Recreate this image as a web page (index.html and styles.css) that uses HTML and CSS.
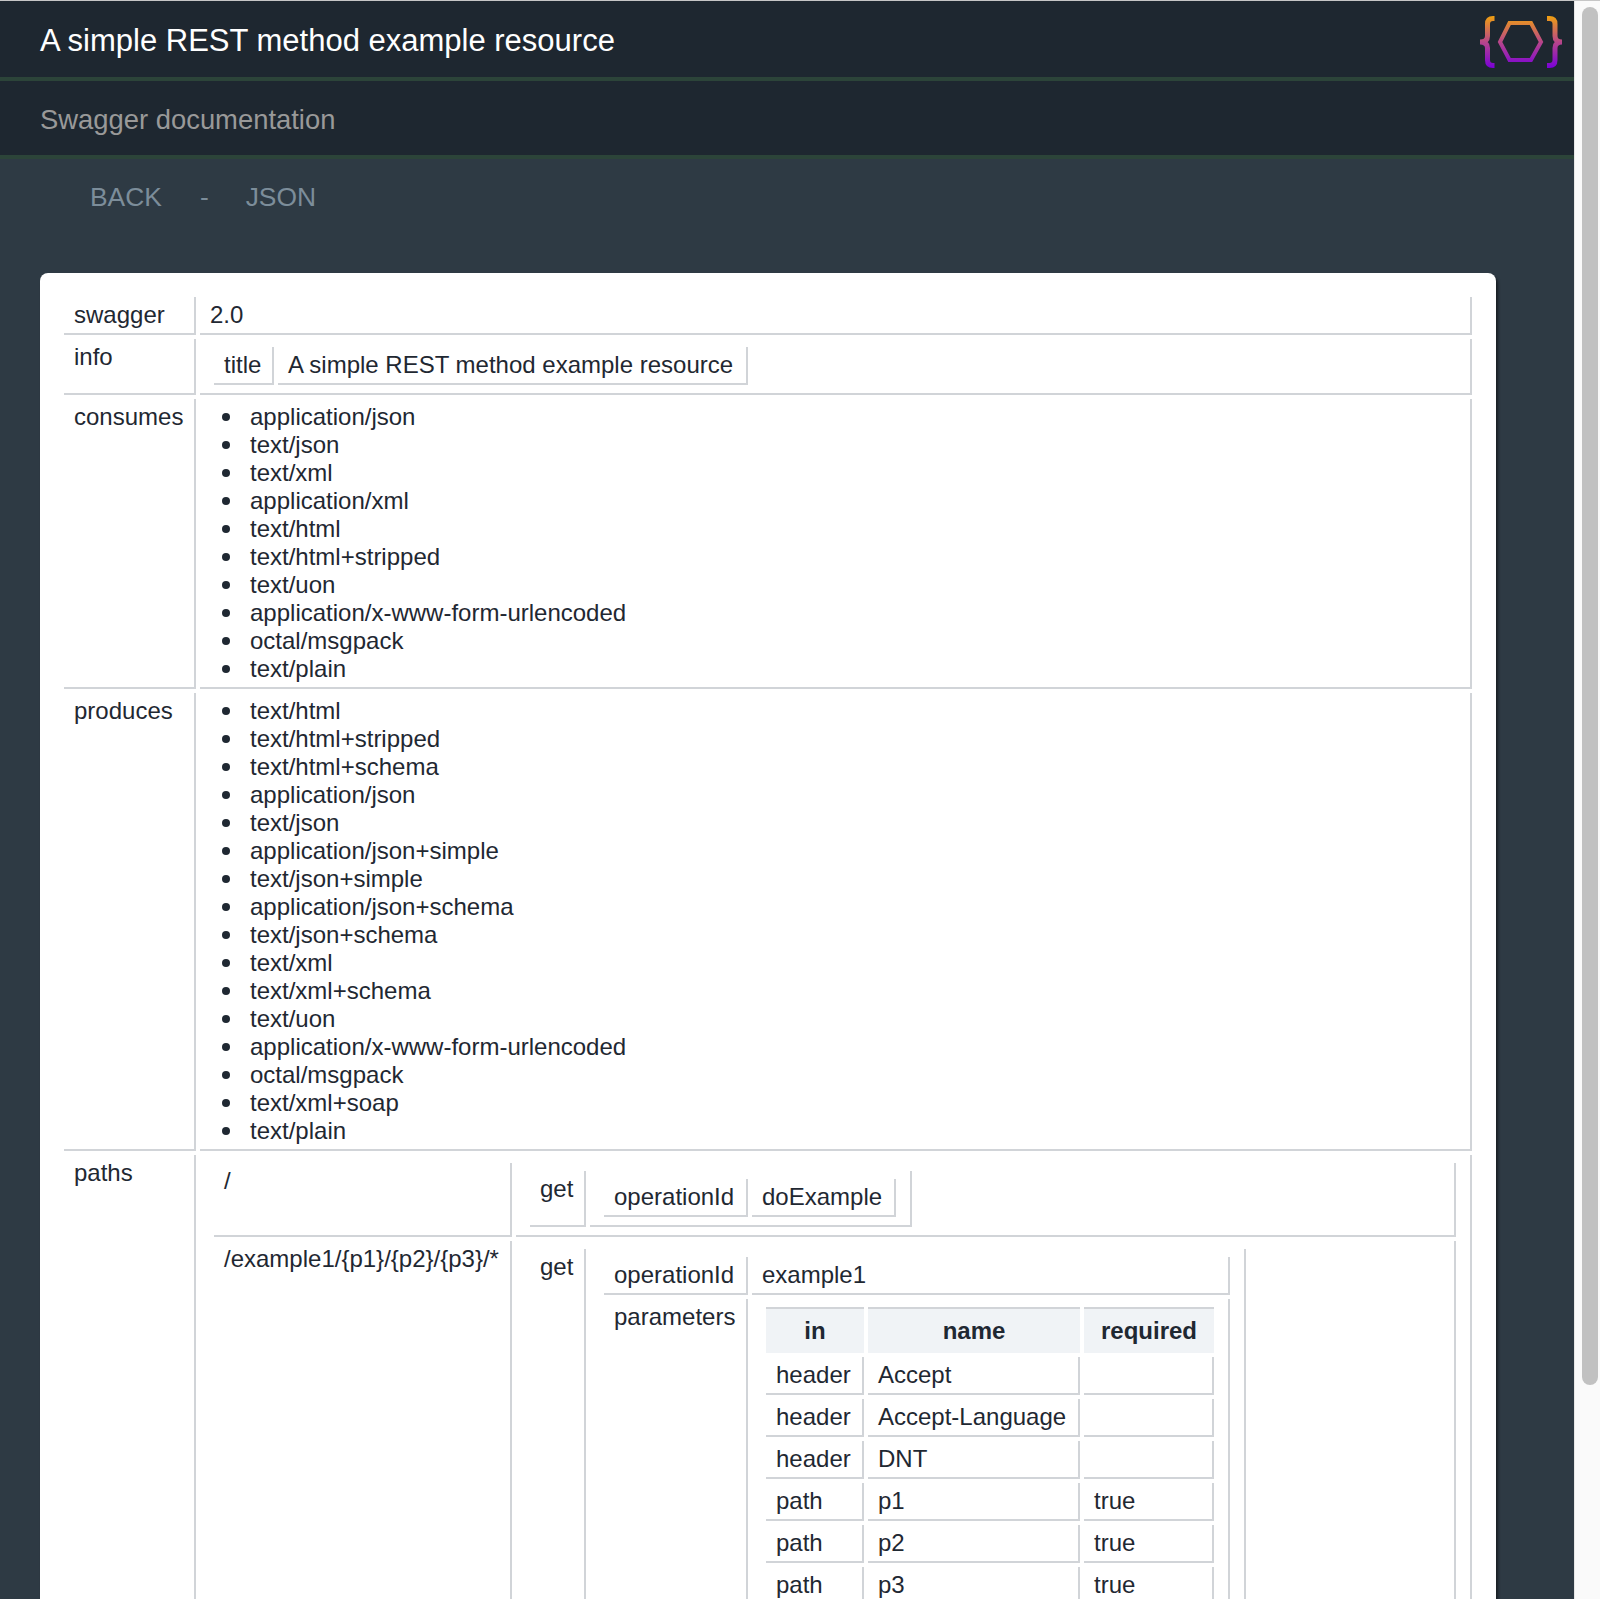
FILE: index.html
```html
<!DOCTYPE html>
<html lang="en">
<head>
<meta charset="utf-8">
<title>A simple REST method example resource</title>
<link rel="stylesheet" href="styles.css">
</head>
<body>
<div class="viewport">
  <header class="title-bar">
    <h1 class="title">A simple REST method example resource</h1>
    <svg class="logo" width="88" height="60" viewBox="0 0 88 60" fill="none" aria-hidden="true">
      <defs>
        <linearGradient id="lg" gradientUnits="userSpaceOnUse" x1="0" y1="4" x2="0" y2="56">
          <stop offset="0" stop-color="#f0a010"/>
          <stop offset="0.5" stop-color="#b8468a"/>
          <stop offset="1" stop-color="#7a00d8"/>
        </linearGradient>
      </defs>
      <g stroke="url(#lg)" stroke-width="5">
        <path d="M18.5 6.5H17Q11.5 6.5 11.5 12V24Q11.5 30 4 30Q11.5 30 11.5 36V48Q11.5 53.5 17 53.5H18.5"/>
        <path d="M71 6.5H73.5Q79 6.5 79 12V24Q79 30 86 30Q79 30 79 36V48Q79 53.5 73.5 53.5H71"/>
        <path d="M24 30L33.5 11H55L65 30L55 48H33.5Z" stroke-width="4"/>
      </g>
    </svg>
  </header>
  <div class="sub-bar"><h2 class="subtitle">Swagger documentation</h2></div>
  <nav class="links"><a class="link">BACK</a><span class="link sep">-</span><a class="link">JSON</a></nav>
  <main class="card">
    <table class="t full">
      <tr><td class="k top-key">swagger</td><td>2.0</td></tr>
      <tr><td class="k top-key">info</td><td>
        <table class="t"><tr><td class="k info-key">title</td><td class="info-val">A simple REST method example resource</td></tr></table>
      </td></tr>
      <tr><td class="k top-key">consumes</td><td>
        <ul class="list">
          <li>application/json</li><li>text/json</li><li>text/xml</li><li>application/xml</li><li>text/html</li><li>text/html+stripped</li><li>text/uon</li><li>application/x-www-form-urlencoded</li><li>octal/msgpack</li><li>text/plain</li>
        </ul>
      </td></tr>
      <tr><td class="k top-key">produces</td><td>
        <ul class="list">
          <li>text/html</li><li>text/html+stripped</li><li>text/html+schema</li><li>application/json</li><li>text/json</li><li>application/json+simple</li><li>text/json+simple</li><li>application/json+schema</li><li>text/json+schema</li><li>text/xml</li><li>text/xml+schema</li><li>text/uon</li><li>application/x-www-form-urlencoded</li><li>octal/msgpack</li><li>text/xml+soap</li><li>text/plain</li>
        </ul>
      </td></tr>
      <tr><td class="k top-key">paths</td><td>
        <table class="t full">
          <tr><td class="k path-key">/</td><td>
            <table class="t"><tr><td class="k method-key">get</td><td>
              <table class="t"><tr><td class="k op-key">operationId</td><td class="op-val">doExample</td></tr></table>
            </td></tr></table>
          </td></tr>
          <tr><td class="k path-key">/example1/{p1}/{p2}/{p3}/*</td><td>
            <table class="t"><tr><td class="k method-key">get</td><td>
              <table class="t">
                <tr><td class="k op-key">operationId</td><td>example1</td></tr>
                <tr><td class="k op-key">parameters</td><td>
                  <table class="t">
                    <tr><th class="col-in">in</th><th class="col-name">name</th><th class="col-req">required</th></tr>
                    <tr><td>header</td><td>Accept</td><td></td></tr>
                    <tr><td>header</td><td>Accept-Language</td><td></td></tr>
                    <tr><td>header</td><td>DNT</td><td></td></tr>
                    <tr><td>path</td><td>p1</td><td>true</td></tr>
                    <tr><td>path</td><td>p2</td><td>true</td></tr>
                    <tr><td>path</td><td>p3</td><td>true</td></tr>
                  </table>
                </td></tr>
              </table>
            </td></tr></table>
          </td></tr>
        </table>
      </td></tr>
    </table>
  </main>
</div>
<aside class="scrollbar"><div class="thumb"></div></aside>
</body>
</html>
```
FILE: styles.css
```css
* { box-sizing: border-box; }
html, body { margin: 0; height: 100%; overflow: hidden; }
body {
  display: flex;
  border-top: 1px solid #c6c6c6;
  background: #2e3a44;
  font-family: "Liberation Sans", Arial, sans-serif;
  color: #1f2832;
  font-size: 24px;
  line-height: 28px;
}
.viewport { flex: 1; min-width: 0; overflow: hidden; background: #2e3a44; }
.title-bar {
  height: 80px;
  padding: 4px 10px 0 40px;
  display: flex;
  justify-content: space-between;
  align-items: center;
  background: #1e2730;
  border-bottom: 4px solid #2c4439;
}
.title { margin: 0; font-size: 31px; line-height: 38px; font-weight: 400; color: #fff; }
.logo { margin-top: 2px; }
.sub-bar {
  height: 78px;
  padding: 4px 40px 0;
  display: flex;
  align-items: center;
  background: #1e2730;
  border-bottom: 4px solid #2c4439;
}
.subtitle { margin: 0; font-size: 27.4px; line-height: 34px; font-weight: 400; color: #999; }
.links {
  height: 114px;
  padding: 19px 0 0 90px;
  display: flex;
  gap: 38px;
  font-size: 26.4px;
  line-height: 38px;
  color: #7c8d9a;
}
.sep { margin-right: -1px; }
.card {
  margin: 0 78px 0 40px;
  padding: 20px;
  background: #fff;
  border-radius: 8px;
  box-shadow: 2px 3px 3px 0 rgba(0, 0, 0, 0.5);
}
.t { border-collapse: separate; border-spacing: 4px; }
.full { width: 100%; }
.t td {
  padding: 4px 10px;
  vertical-align: top;
  border-right: 2px solid #d1d4d8;
  border-bottom: 2px solid #d1d4d8;
}
.t td.k { white-space: nowrap; }
.t td.top-key { width: 132px; }
.t td.info-key { width: 60px; }
.t td.info-val { width: 470px; }
.t td.path-key { width: 298px; }
.t td.method-key { width: 56px; }
.t td.op-key { width: 144px; }
.t td.op-val { width: 144px; }
.t th {
  padding: 8px 0;
  font-weight: 700;
  text-align: center;
  background: #f0f3f6;
  border-top: 2px solid #d1d4d8;
}
.t th.col-in { width: 98px; }
.t th.col-name { width: 212px; }
.t th.col-req { width: 130px; }
.list { margin: 0; padding: 0 0 0 40px; list-style: none; }
.list li { position: relative; }
.list li::before {
  content: "";
  position: absolute;
  left: -28px;
  top: 10px;
  width: 8px;
  height: 8px;
  border-radius: 50%;
  background: #1f2832;
}
.scrollbar {
  flex: none;
  width: 26px;
  padding: 6px 2px 0 7px;
  background: #fafafa;
  border-left: 1px solid #e6e6e6;
}
.thumb { height: 1378px; border-radius: 8px; background: #c1c1c1; }
```
